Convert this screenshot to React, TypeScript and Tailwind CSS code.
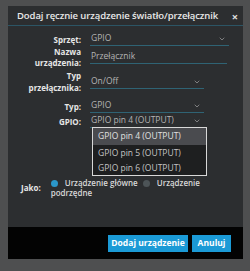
import { ChevronDown } from 'lucide-react'

const font = { fontFamily: '"Open Sans", "Liberation Sans", sans-serif' }

interface RowProps {
  label: React.ReactNode
  value: string
  select?: boolean
  width: string
  className?: string
  leading?: string
}

function Row({ label, value, select, width, className, leading }: RowProps) {
  return (
    <div className={`flex items-center ${className ?? ''}`}>
      <div
        className={`w-[64px] shrink-0 text-right font-bold text-[8px] ${leading ?? 'leading-[11px]'} text-[#e6e6e6]`}
      >
        {label}
      </div>
      <div
        className={`ml-[9px] ${width} relative flex items-center h-[14px] border-b border-[#2f6374] pl-[1px] text-[8.5px] text-[#b4b4b4]`}
      >
        <span>{value}</span>
        {select && (
          <ChevronDown
            size={8}
            strokeWidth={2}
            className="absolute right-[3px] top-[3px] text-[#a9a9a9]"
          />
        )}
      </div>
    </div>
  )
}

function App() {
  return (
    <div className="w-[250px] h-[271px] bg-[#4e4f50] pt-[6px] pl-[8px]" style={font}>
      <div className="w-[235px] h-[253px] bg-[#2c2e30] flex flex-col">
        <div className="flex items-center justify-between h-[18px] mt-[2px] pl-[9px] pr-[5px] border-b border-[#2c5565]">
          <span className="text-[9.5px] font-semibold text-[#e8e8e8] tracking-[-0.1px]">
            Dodaj ręcznie urządzenie światło/przełącznik
          </span>
          <span className="text-[11px] font-bold text-[#e0e0e0] leading-none">×</span>
        </div>

        <div className="relative flex-1 pl-[9px] pt-[6px]">
          <Row label="Sprzęt:" value="GPIO" select width="w-[139px]" />
          <Row
            label={
              <>
                Nazwa
                <br />
                urządzenia:
              </>
            }
            value="Przełącznik"
            width="w-[137px]"
          />
          <Row
            label={
              <>
                Typ
                <br />
                przełącznika:
              </>
            }
            value="On/Off"
            select
            width="w-[114px]"
            leading="leading-[12px]"
            className="mt-[2px]"
          />
          <Row label="Typ:" value="GPIO" select width="w-[114px]" className="mt-[5px]" />
          <Row label="GPIO:" value="GPIO pin 4 (OUTPUT)" select width="w-[114px]" className="mt-[1px]" />

          <div className="absolute left-[84px] top-[101px] w-[115px] border border-[#d8d8d8] bg-[#1e1f20] text-[8.5px] text-[#c4c4c4]">
            <div className="h-[17px] flex items-center pl-[5px] bg-[#4a4b4f] text-[#e0e0e0]">
              GPIO pin 4 (OUTPUT)
            </div>
            <div className="h-[16px] flex items-center pl-[5px]">GPIO pin 5 (OUTPUT)</div>
            <div className="h-[14px] flex items-center pl-[5px]">GPIO pin 6 (OUTPUT)</div>
          </div>

          <div className="flex items-center mt-[50px] ml-[4px] leading-[10px]">
            <span className="font-bold text-[8px] text-[#e6e6e6]">Jako:</span>
            <div className="ml-[10px] w-[152px] font-semibold text-[8px] text-[#d8d8d8]">
              <span className="inline-block w-[7px] h-[7px] rounded-full bg-[#2b97c9] mr-[7px] align-[-1px]" />
              Urządzenie główne
              <span className="inline-block w-[7px] h-[7px] rounded-full bg-[#4d5457] ml-[5px] mr-[7px] align-[-1px]" />
              Urządzenie podrzędne
            </div>
          </div>
        </div>

        <div className="h-[32px] bg-[#030303] flex items-center justify-end gap-[4px] pr-[12px]">
          <button className="h-[17px] w-[80px] bg-[#1b9ad6] text-white text-[8.5px] font-bold">
            Dodaj urządzenie
          </button>
          <button className="h-[17px] w-[39px] bg-[#1b9ad6] text-white text-[8.5px] font-bold">
            Anuluj
          </button>
        </div>
      </div>
    </div>
  )
}

export default App
